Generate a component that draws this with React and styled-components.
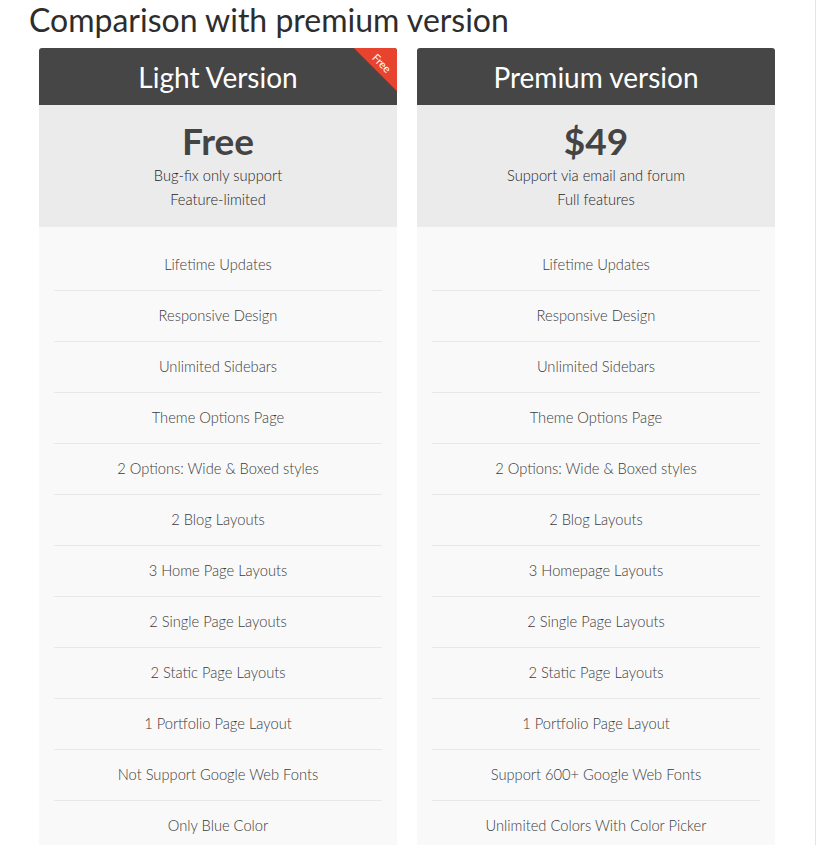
import React from 'react';
import styled, { createGlobalStyle } from 'styled-components';

const plans = [
  {
    name: 'Light Version',
    price: 'Free',
    notes: ['Bug-fix only support', 'Feature-limited'],
    ribbon: 'Free',
    features: [
      'Lifetime Updates',
      'Responsive Design',
      'Unlimited Sidebars',
      'Theme Options Page',
      '2 Options: Wide & Boxed styles',
      '2 Blog Layouts',
      '3 Home Page Layouts',
      '2 Single Page Layouts',
      '2 Static Page Layouts',
      '1 Portfolio Page Layout',
      'Not Support Google Web Fonts',
      'Only Blue Color',
    ],
  },
  {
    name: 'Premium version',
    price: '$49',
    notes: ['Support via email and forum', 'Full features'],
    features: [
      'Lifetime Updates',
      'Responsive Design',
      'Unlimited Sidebars',
      'Theme Options Page',
      '2 Options: Wide & Boxed styles',
      '2 Blog Layouts',
      '3 Homepage Layouts',
      '2 Single Page Layouts',
      '2 Static Page Layouts',
      '1 Portfolio Page Layout',
      'Support 600+ Google Web Fonts',
      'Unlimited Colors With Color Picker',
    ],
  },
];

function App() {
  return (
    <>
      <GlobalStyle />
      <Page>
        <Title>Comparison with premium version</Title>
        <Columns>
          {plans.map((plan) => (
            <Card key={plan.name}>
              <Header>
                {plan.name}
                {plan.ribbon && <Ribbon>{plan.ribbon}</Ribbon>}
              </Header>
              <PriceBox>
                <Price>{plan.price}</Price>
                {plan.notes.map((n) => (
                  <Note key={n}>{n}</Note>
                ))}
              </PriceBox>
              <Features>
                {plan.features.map((f) => (
                  <Feature key={f}>{f}</Feature>
                ))}
              </Features>
            </Card>
          ))}
        </Columns>
      </Page>
    </>
  );
}

const GlobalStyle = createGlobalStyle`
  body {
    margin: 0;
    background: #fff;
    font-family: Lato, "Open Sans", sans-serif;
    overflow: hidden;
  }
`;

const Page = styled.div`
  width: 816px;
  min-height: 100vh;
  box-sizing: border-box;
  border-right: 1px solid #e4e4e4;
`;

const Title = styled.h1`
  margin: 0 0 8px;
  padding-left: 29px;
  font-size: 32px;
  line-height: 40px;
  font-weight: 400;
  color: #2d2d2d;
`;

const Columns = styled.div`
  display: grid;
  grid-template-columns: 358px 358px;
  gap: 20px;
  padding-left: 39px;
`;

const Card = styled.div`
  position: relative;
  overflow: hidden;
  border-radius: 3px 3px 0 0;
`;

const Header = styled.div`
  height: 57px;
  display: flex;
  align-items: center;
  justify-content: center;
  background: #464646;
  color: #fff;
  font-size: 28px;
`;

const Ribbon = styled.div`
  position: absolute;
  top: -4px;
  right: -39px;
  width: 100px;
  height: 30px;
  box-sizing: border-box;
  padding-top: 13px;
  background: #e8432f;
  color: #fff;
  font-size: 11px;
  line-height: 16px;
  text-align: center;
  transform: rotate(45deg);
`;

const PriceBox = styled.div`
  background: #ebebeb;
  padding: 14px 0 16px;
  text-align: center;
`;

const Price = styled.div`
  font-size: 37px;
  line-height: 44px;
  font-weight: 700;
  color: #444;
`;

const Note = styled.div`
  font-size: 14.7px;
  line-height: 24px;
  font-weight: 300;
  color: #1e1e1e;
`;

const Features = styled.ul`
  margin: 0;
  list-style: none;
  background: #f9f9f9;
  padding: 13px 15px 0;
`;

const Feature = styled.li`
  height: 48px;
  padding-bottom: 2px;
  display: flex;
  align-items: center;
  justify-content: center;
  border-bottom: 1px solid #e8e8e8;
  font-size: 14.7px;
  font-weight: 300;
  color: #3c3c3c;
`;

export default App;
